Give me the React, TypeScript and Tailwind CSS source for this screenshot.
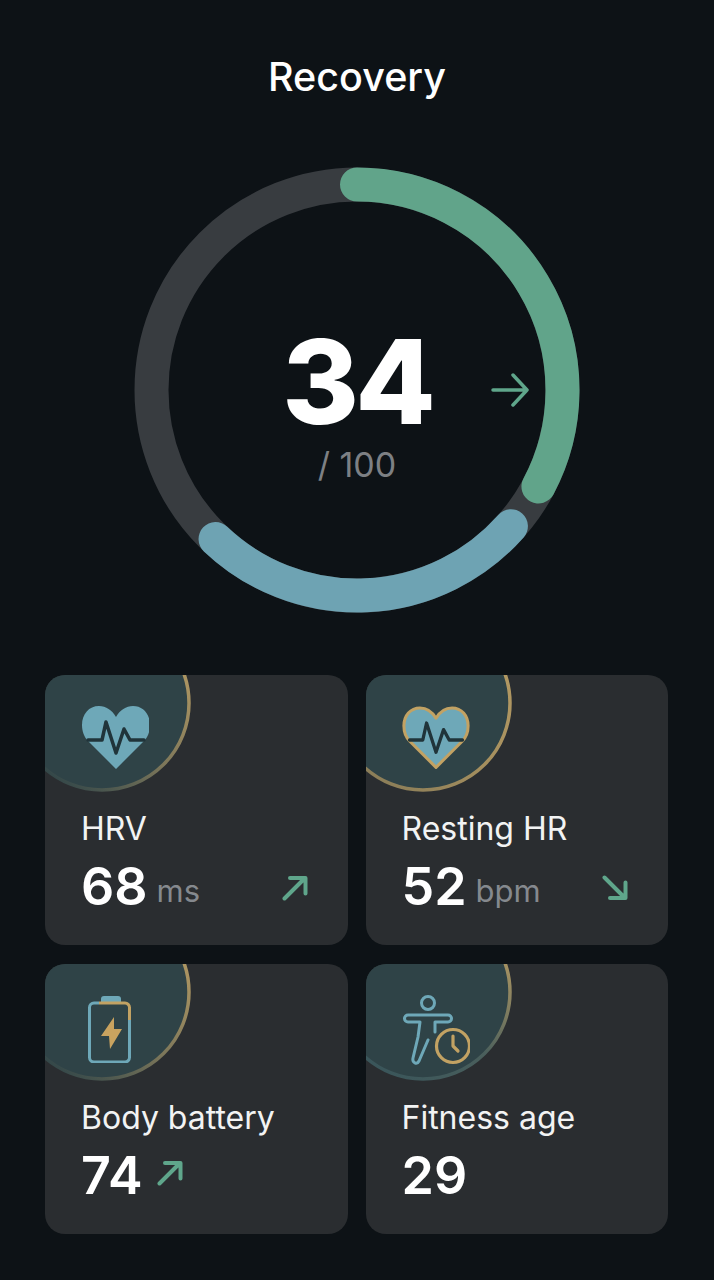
import type { ReactNode } from "react";

const CX = 223;
const CY = 223;
const R = 205.5;

function arc(startDeg: number, endDeg: number) {
  const pt = (deg: number) => {
    const a = ((deg - 90) * Math.PI) / 180;
    return `${CX + R * Math.cos(a)} ${CY + R * Math.sin(a)}`;
  };
  const large = endDeg - startDeg > 180 ? 1 : 0;
  return `M${pt(startDeg)} A${R} ${R} 0 ${large} 1 ${pt(endDeg)}`;
}

function Ring() {
  return (
    <svg width="446" height="446" viewBox="0 0 446 446" className="block" fill="none">
      <circle cx={CX} cy={CY} r={R} stroke="#383c40" strokeWidth="34" />
      <path d={arc(0, 118)} stroke="#61a48a" strokeWidth="34" strokeLinecap="round" />
      <path d={arc(131.5, 223.5)} stroke="#6ea3b3" strokeWidth="34" strokeLinecap="round" />
    </svg>
  );
}

function Arrow({ dir }: { dir: "up" | "down" }) {
  return (
    <svg width="26" height="26" viewBox="0 0 26 26" fill="none" stroke="#5fa68b" strokeWidth="4" strokeLinecap="round" strokeLinejoin="round">
      {dir === "up" ? (
        <path d="M2.500 23.500 23 3M8 3h15.500v15.500" />
      ) : (
        <path d="M2.500 2.500 23 23M8 23h15.500V7.500" />
      )}
    </svg>
  );
}

function Badge({ id, gold }: { id: string; gold: "arc" | "full" | "top" }) {
  const mid = gold === "full" ? "#a58f5e" : gold === "top" ? "#4a5f5c" : "#7d775a";
  const end = gold === "full" ? "#8a7d58" : gold === "top" ? "#39555a" : "#304548";
  return (
    <svg width="180" height="180" viewBox="0 0 180 180" className="absolute left-[-33px] top-[-62px]" fill="none">
      <defs>
        <linearGradient id={id} x1="1" y1="0.25" x2="0.25" y2="1">
          <stop offset="0" stopColor="#b49a63" />
          <stop offset="0.5" stopColor={mid} />
          <stop offset="1" stopColor={end} />
        </linearGradient>
      </defs>
      <circle cx="90" cy="90" r="87" fill="#2f4347" stroke={`url(#${id})`} strokeWidth="3.500" />
    </svg>
  );
}

const HEART = "M34 63 6 35C2 31 0 25 0 19 0 8 7 0 17 0 24 0 30 4 34 11 38 4 44 0 51 0 61 0 68 8 68 19 68 25 66 31 62 35Z";
const PULSE = "M6 34H20L24 16 34 47 42 23 48 34H62";

function HeartIcon({ outlined }: { outlined?: boolean }) {
  return (
    <svg width="68" height="68" viewBox={outlined ? "-2 -2 72 72" : "-1 0 68 68"} fill="none" className="block">
      <path d={HEART} fill="#6ea8b8" stroke={outlined ? "#c2a263" : "none"} strokeWidth="3.200" strokeLinejoin="round" />
      <path d={PULSE} stroke="#20343a" strokeWidth="3.500" strokeLinecap="round" strokeLinejoin="round" />
    </svg>
  );
}

function BatteryIcon() {
  return (
    <svg width="68" height="68" viewBox="-3 0 68 68" fill="none" className="block">
      <path d="M17 8V4a3 3 0 0 1 3-3h14a3 3 0 0 1 3 3v4Z" fill="#6ea8b8" />
      <path d="M15 8H10a4.500 4.500 0 0 0-4.500 4.500v50A4.500 4.500 0 0 0 10 67h31a4.500 4.500 0 0 0 4.500-4.500V25" stroke="#6ea8b8" strokeWidth="3" />
      <path d="M15 8H41a4.500 4.500 0 0 1 4.500 4.500V25" stroke="#c2a263" strokeWidth="3" />
      <path d="M30 22 17 41H25L26 54 38 34H30Z" fill="#c9a35f" />
    </svg>
  );
}

function FitnessIcon() {
  return (
    <svg width="68" height="72" viewBox="0 0 68 72" fill="none" className="block">
      <circle cx="26" cy="8" r="6.500" stroke="#6ea8b8" strokeWidth="3" />
      <path
        d="M6 20H46A3.500 3.500 0 0 1 46 27H33V37M6 20A3.500 3.500 0 0 0 6 27H18L16 42 11 63C10 68 15 70 17 66L26 45"
        stroke="#6ea8b8"
        strokeWidth="3"
        strokeLinecap="round"
        strokeLinejoin="round"
      />
      <circle cx="51" cy="51" r="16.500" stroke="#c2a263" strokeWidth="3.200" />
      <path d="M51 41V51L56 56" stroke="#c2a263" strokeWidth="3.200" strokeLinecap="round" strokeLinejoin="round" />
    </svg>
  );
}

type Metric = {
  id: string;
  gold: "arc" | "full" | "top";
  icon: ReactNode;
  label: string;
  value: string;
  unit?: string;
  trend?: "up" | "down";
  inlineTrend?: boolean;
};

const METRICS: Metric[] = [
  { id: "b1", gold: "arc", icon: <HeartIcon />, label: "HRV", value: "68", unit: "ms", trend: "up" },
  { id: "b2", gold: "full", icon: <HeartIcon outlined />, label: "Resting HR", value: "52", unit: "bpm", trend: "down" },
  { id: "b3", gold: "arc", icon: <BatteryIcon />, label: "Body battery", value: "74", trend: "up", inlineTrend: true },
  { id: "b4", gold: "top", icon: <FitnessIcon />, label: "Fitness age", value: "29" },
];

function Card({ m }: { m: Metric }) {
  return (
    <div className="relative h-[270px] overflow-hidden rounded-[20px] bg-[#2a2d30] pl-[36px] pr-[40px] pt-[31px]">
      <Badge id={m.id} gold={m.gold} />
      <div className="relative h-[68px]">{m.icon}</div>
      <div className="relative mt-[30px] text-[32px] leading-[50px] text-[#f2f3f3]">{m.label}</div>
      <div className="relative mt-[3px] flex h-[60px] items-center">
        <span className="text-[52px] font-semibold leading-[60px] text-white">{m.value}</span>
        {m.unit && <span className="ml-[9px] mt-[8px] text-[31px] leading-[40px] text-[#85898e]">{m.unit}</span>}
        {m.trend && (
          <span className={m.inlineTrend ? "ml-[14px] mt-[-6px]" : "ml-auto mt-[2px]"}>
            <Arrow dir={m.trend} />
          </span>
        )}
      </div>
    </div>
  );
}

export default function App() {
  return (
    <div
      className="h-[1280px] w-[714px] overflow-hidden bg-[#0d1216] pt-[52px]"
      style={{ fontFamily: "Inter, 'Liberation Sans', sans-serif" }}
    >
      <h1 className="text-center text-[39.5px] font-medium leading-[50px] text-white">Recovery</h1>

      <div className="relative ml-[134px] mt-[65px] h-[446px] w-[446px]">
        <Ring />
        <div className="absolute left-0 top-[165px] w-full text-center">
          <div className="text-[117px] font-extrabold leading-[100px] tracking-[-4px] text-white">34</div>
          <div className="mt-[11px] text-[34px] leading-[44px] text-[#7d8084]">/ 100</div>
        </div>
        <svg width="38" height="34" viewBox="0 0 38 34" fill="none" className="absolute left-[357px] top-[206px]" stroke="#5fa68b" strokeWidth="3.500" strokeLinecap="round" strokeLinejoin="round">
          <path d="M2 17H36M22 2 36 17 22 32" />
        </svg>
      </div>

      <div className="mt-[62px] grid grid-cols-2 gap-x-[18px] gap-y-[19px] pl-[45px] pr-[46px]">
        {METRICS.map((m) => (
          <Card key={m.id} m={m} />
        ))}
      </div>
    </div>
  );
}
